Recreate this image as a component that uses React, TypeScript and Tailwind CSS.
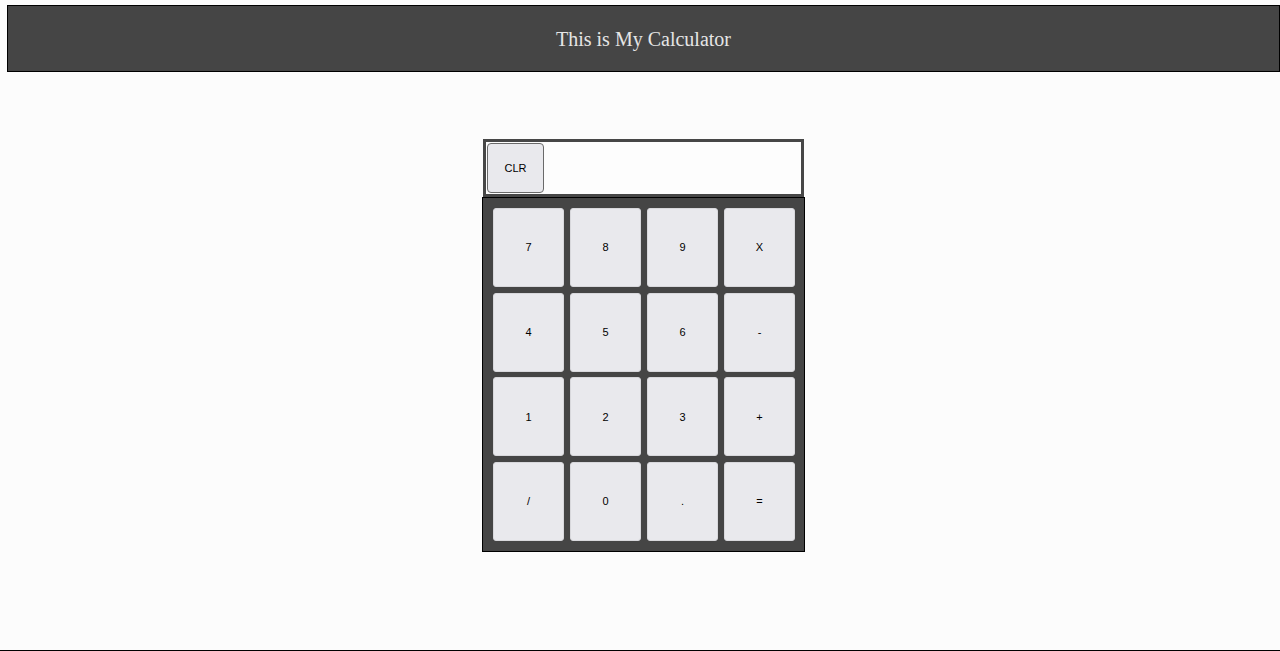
import React from "react";

const keys = ["7", "8", "9", "X", "4", "5", "6", "-", "1", "2", "3", "+", "/", "0", ".", "="];

export default function App() {
  return (
    <div className="h-[651px] bg-[#fcfcfc] flex flex-col overflow-hidden" style={{ fontFamily: '"Liberation Sans", Arial, sans-serif' }}>
      <div className="ml-[7px] mt-[5px] w-[1273px] h-[67px] bg-[#454545] border border-black flex items-center justify-center">
        <h1 className="text-[20px] text-[#e6e6e6]" style={{ fontFamily: '"Liberation Serif", "Times New Roman", serif' }}>
          This is My Calculator
        </h1>
      </div>
      <div className="ml-[7px] w-[1273px] flex flex-col items-center mt-[67px]">
        <div className="w-[321px] h-[58px] border-[3px] border-[#474747] bg-[#fdfdfd] p-[1px] flex">
          <button className="w-[57px] h-[50px] bg-[#e9e9ed] border border-[#6a6a6a] rounded-[4px] text-[11px] text-black">
            CLR
          </button>
        </div>
        <div className="w-[323px] h-[355px] bg-[#454545] border border-black pt-[10px] pl-[10px] pr-[9px] grid grid-cols-[repeat(4,71px)] grid-rows-[repeat(4,79px)] gap-x-[6px] gap-y-[5.67px] content-start">
          {keys.map((k) => (
            <button
              key={k}
              className="bg-[#e9e9ed] border border-[#d8d8dc] rounded-[3px] text-[11px] text-black flex items-center justify-center"
            >
              {k}
            </button>
          ))}
        </div>
      </div>
      <div className="flex-1" />
      <div className="h-[1px] bg-black shrink-0" />
    </div>
  );
}
